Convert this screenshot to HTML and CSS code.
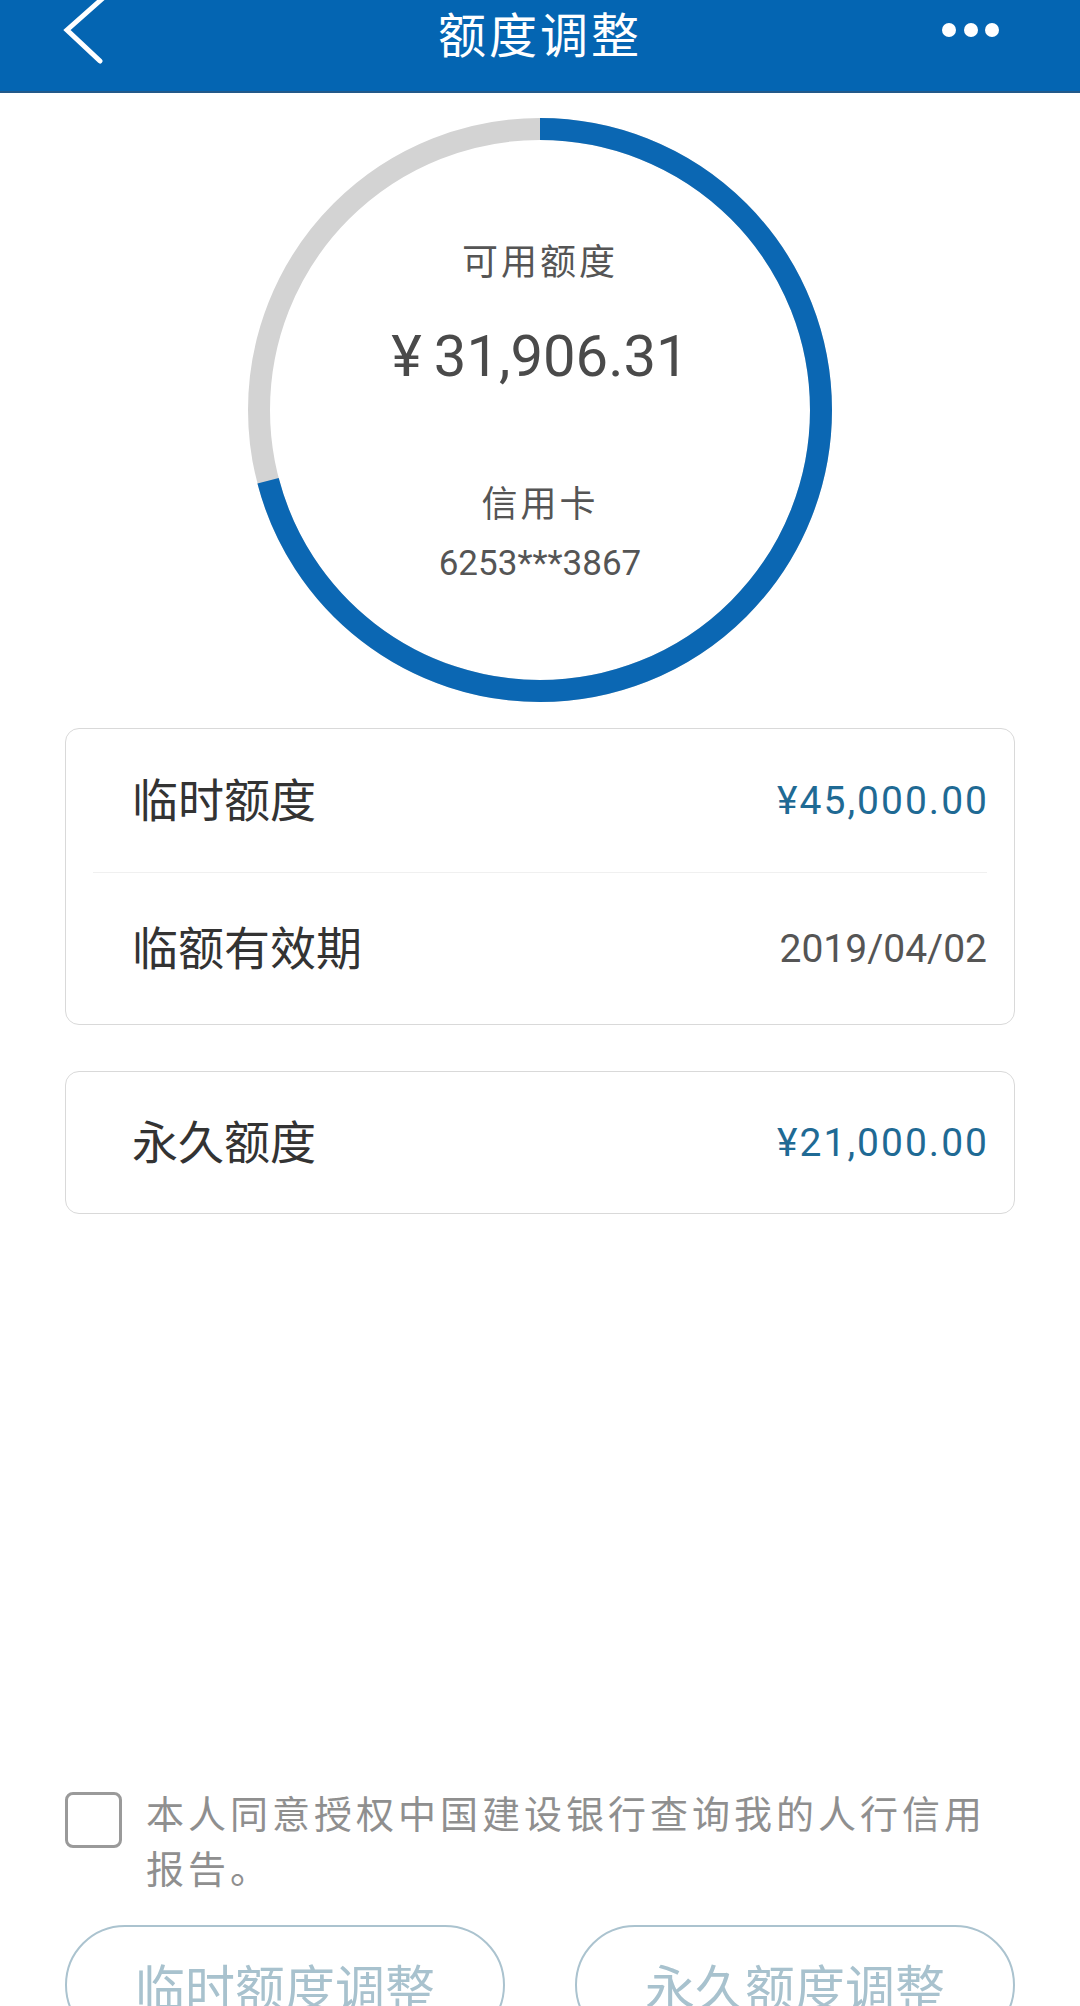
FILE: index.html
```html
<!DOCTYPE html>
<html lang="zh-CN">
<head>
    <meta charset="UTF-8">
    <meta name="viewport" content="width=device-width, initial-scale=1.0">
    <title>额度调整</title>
    <link rel="stylesheet" href="styles.css">
</head>
<body>
    <header class="topbar">
        <svg class="back-icon" width="46" height="66" viewBox="0 0 46 66">
            <polyline points="42,-1 7,30 40,61" fill="none" stroke="#fff" stroke-width="5" stroke-linecap="round" stroke-linejoin="miter"/>
        </svg>
        <h1 class="topbar-title">额度调整</h1>
        <svg class="more-icon" width="60" height="64" viewBox="0 0 60 64">
            <circle cx="9" cy="30" r="7" fill="#fff"/>
            <circle cx="31" cy="30" r="7" fill="#fff"/>
            <circle cx="52" cy="30" r="7" fill="#fff"/>
        </svg>
    </header>

    <section class="gauge">
        <svg class="gauge-ring" width="584" height="584" viewBox="0 0 584 584">
            <circle cx="292" cy="292" r="281" fill="none" stroke="#d3d3d3" stroke-width="22"/>
            <!-- 31906.31 / 45000 of the ring -->
            <circle cx="292" cy="292" r="281" fill="none" stroke="#0b67b3" stroke-width="22"
                    stroke-dasharray="1252 1766" transform="rotate(-90 292 292)"/>
        </svg>
        <div class="gauge-text">
            <div class="gauge-label">可用额度</div>
            <div class="gauge-amount"><span class="yen">¥</span>31,906.31</div>
            <div class="gauge-card">信用卡</div>
            <div class="gauge-number">6253***3867</div>
        </div>
    </section>

    <div class="card">
        <div class="row row-first">
            <span class="row-label">临时额度</span>
            <span class="row-value money">¥45,000.00</span>
        </div>
        <div class="divider"></div>
        <div class="row row-second">
            <span class="row-label">临额有效期</span>
            <span class="row-value">2019/04/02</span>
        </div>
    </div>

    <div class="card card-single">
        <div class="row">
            <span class="row-label">永久额度</span>
            <span class="row-value money">¥21,000.00</span>
        </div>
    </div>

    <div class="agree">
        <div class="checkbox"></div>
        <p class="agree-text">本人同意授权中国建设银行查询我的人行信用报告。</p>
    </div>

    <div class="actions">
        <button class="action-btn">临时额度调整</button>
        <button class="action-btn">永久额度调整</button>
    </div>
</body>
</html>
```

FILE: styles.css
```css
body {
    margin: 0;
    background-color: #fff;
    font-family: Roboto, "Noto Sans CJK SC", sans-serif;
    color: #333;
    overflow: hidden;
}
.topbar {
    display: grid;
    grid-template-columns: 1fr auto 1fr;
    align-items: start;
    height: 91px;
    background-color: #0465b2;
    border-bottom: 2px solid #22598a;
}
.back-icon {
    margin-left: 60px;
}
.topbar-title {
    margin: 0;
    font-size: 48px;
    font-weight: normal;
    letter-spacing: 3px;
    line-height: 64px;
    color: #fff;
    font-family: "Noto Sans CJK SC", sans-serif;
}
.more-icon {
    justify-self: end;
    margin-right: 80px;
}
.gauge {
    position: relative;
    width: 584px;
    height: 584px;
    margin: 25px auto 0;
}
.gauge-ring {
    position: absolute;
    top: 0;
    left: 0;
}
.gauge-text {
    position: relative;
    display: flex;
    flex-direction: column;
    align-items: center;
    padding-top: 119px;
    color: #555;
}
.gauge-label,
.gauge-card {
    font-size: 36px;
    line-height: 44px;
    letter-spacing: 3px;
    font-family: "Noto Sans CJK SC", sans-serif;
}
.gauge-amount {
    margin-top: 40px;
    font-size: 58px;
    line-height: 70px;
    color: #4a4a4a;
    letter-spacing: 0;
}
.yen {
    margin-right: 12px;
}
.gauge-card {
    margin-top: 88px;
}
.gauge-number {
    margin-top: 19px;
    font-size: 35px;
    line-height: 44px;
}
.card {
    margin: 26px 65px 0;
    border: 1px solid #d9d9d9;
    border-radius: 14px;
}
.card-single {
    margin-top: 46px;
}
.row {
    display: flex;
    justify-content: space-between;
    align-items: center;
    height: 141px;
    padding: 0 27px 0 66px;
}
.row-first {
    height: 143px;
}
.row-second {
    height: 151px;
}
.row-label {
    margin-bottom: 8px;
    font-size: 46px;
    color: #333;
    font-family: "Noto Sans CJK SC", sans-serif;
}
.row-value {
    font-size: 39px;
    color: #555;
}
.row-value.money {
    color: #1f6a94;
    letter-spacing: 2px;
    margin-right: -2px;
}
.divider {
    height: 1px;
    margin: 0 27px;
    background-color: #f0f0f0;
}
.agree {
    display: flex;
    align-items: flex-start;
    margin: 570px 60px 0 65px;
}
.checkbox {
    flex: none;
    box-sizing: border-box;
    width: 57px;
    height: 56px;
    margin-top: 8px;
    border: 3px solid #9a9a9a;
    border-radius: 8px;
}
.agree-text {
    flex: 1;
    margin: 0 0 0 24px;
    font-size: 38px;
    line-height: 55px;
    letter-spacing: 4px;
    color: #8f8f8f;
    font-family: "Noto Sans CJK SC", sans-serif;
}
.actions {
    display: flex;
    gap: 70px;
    margin: 31px 65px 0;
}
.action-btn {
    flex: 1;
    height: 120px;
    background: #fff;
    border: 2px solid #abc3cf;
    border-radius: 60px;
    font-size: 50px;
    color: #a8c2ce;
    font-family: "Noto Sans CJK SC", sans-serif;
    padding: 0;
}
```
